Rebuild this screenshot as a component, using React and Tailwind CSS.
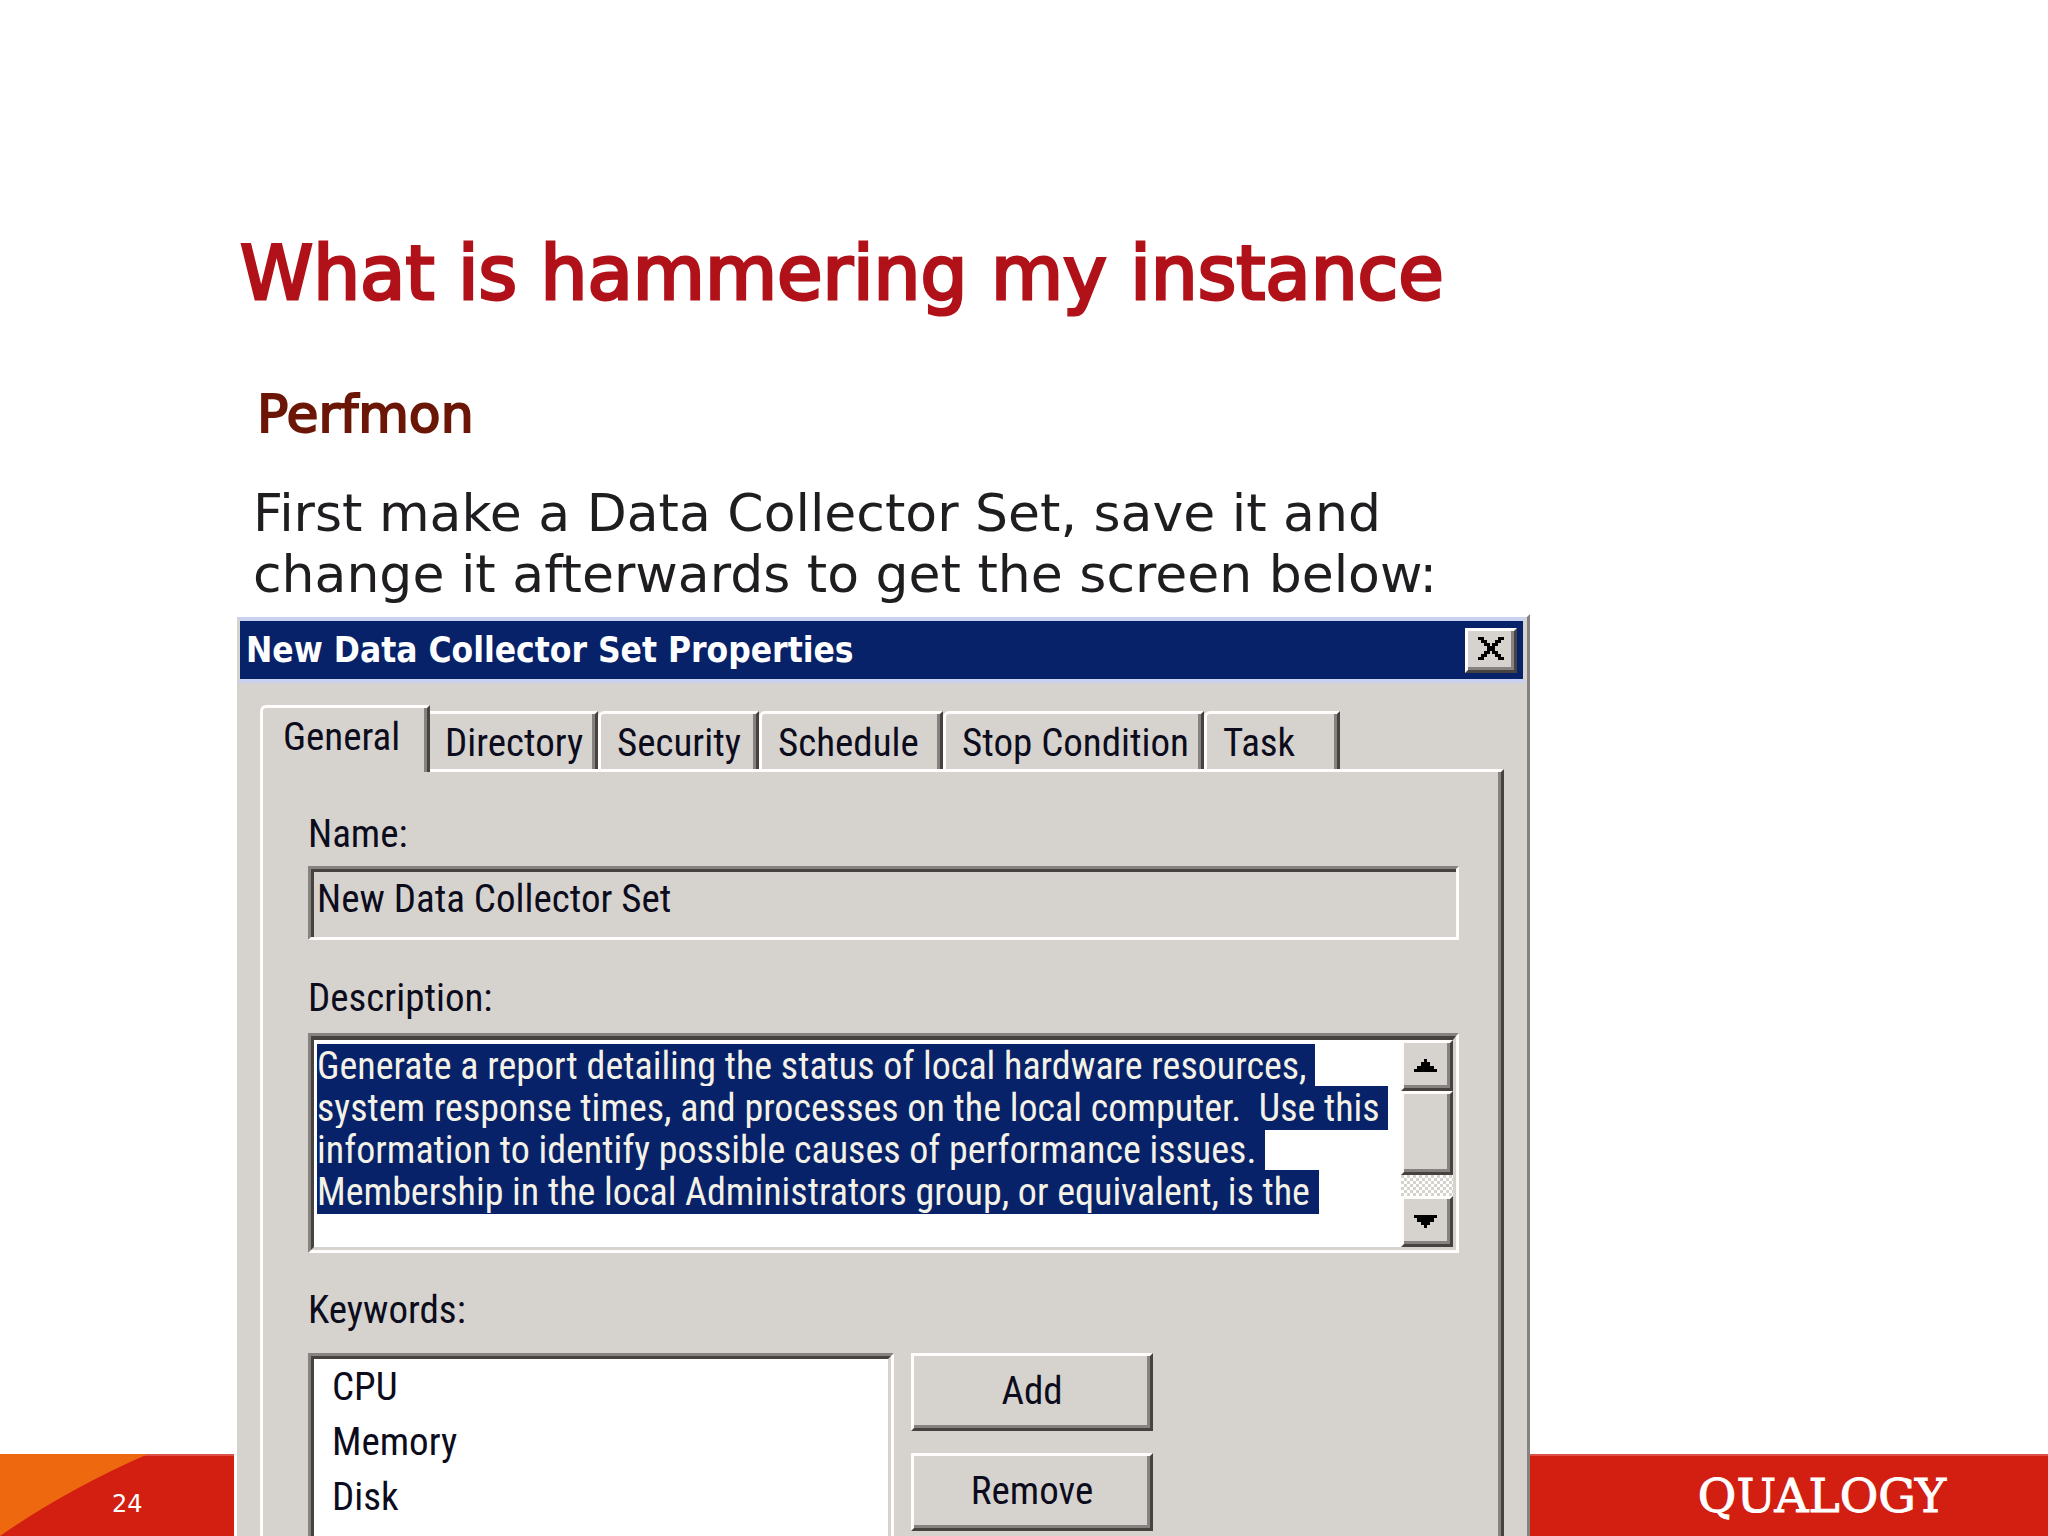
import React, { useEffect, useRef } from "react";

const tabs = [
  { name: "Directory", look: "w-[168px] pl-[15px]" },
  { name: "Security", look: "w-[161px] rounded-tl-[6px] border-l-[3px] pl-[16px]" },
  { name: "Schedule", look: "w-[184px] rounded-tl-[6px] border-l-[3px] pl-[16px]" },
  { name: "Stop Condition", look: "w-[261px] rounded-tl-[6px] border-l-[3px] pl-[16px]" },
  { name: "Task", look: "w-[136px] rounded-tl-[6px] border-l-[3px] pl-[16px]" },
];

const description = [
  "Generate a report detailing the status of local hardware resources,",
  "system response times, and processes on the local computer.  Use this",
  "information to identify possible causes of performance issues.",
  "Membership in the local Administrators group, or equivalent, is the",
  "",
].join("\n");

const raised =
  "border-[3px] border-t-[#fefdfb] border-l-[#fefdfb] border-r-[#454240] border-b-[#454240] bg-[#d6d3cf] shadow-[inset_-3px_-3px_0_#85827f]";
const sunken =
  "border-[3px] border-t-[#85827f] border-l-[#85827f] border-r-[#fefdfb] border-b-[#fefdfb]";

function Arrow({ up }) {
  return (
    <svg
      viewBox="0 0 7 4"
      preserveAspectRatio="none"
      className="h-[13px] w-[23px]"
      shapeRendering="crispEdges"
      aria-hidden="true"
    >
      <path d={up ? "M3 0h1v1h1v1h1v1h1v1H0V3h1V2h1V1h1z" : "M0 0h7v1H6v1H5v1H4v1H3V3H2V2H1V1H0z"} />
    </svg>
  );
}

function ScrollBar() {
  return (
    <div className="flex w-[52px] flex-col bg-[conic-gradient(#d6d3cf_25%,#fff_0_50%,#d6d3cf_0_75%,#fff_0)] bg-[length:6px_6px]">
      <button type="button" aria-label="Scroll up" className={"flex h-[51px] items-center justify-center pr-[3px] " + raised}>
        <Arrow up />
      </button>
      <div className={"h-[84px] " + raised} />
      <div className="flex-1" />
      <button type="button" aria-label="Scroll down" className={"flex h-[51px] items-center justify-center pr-[3px] " + raised}>
        <Arrow />
      </button>
    </div>
  );
}

function PropertiesDialog() {
  const area = useRef(null);
  useEffect(() => {
    area.current.focus({ preventScroll: true });
    area.current.select();
    area.current.scrollTop = 0;
  }, []);

  return (
    <section
      role="dialog"
      aria-labelledby="dialog-title"
      className="h-[1100px] border-l-[3px] border-l-white border-r-[3px] border-r-[#85827f] border-t-[3px] border-t-white bg-[#d6d3cf] font-['Roboto_Condensed','Liberation_Sans',sans-serif] text-[39px] leading-[40px] text-[#0c0c1c]"
    >
      <div className="border-y-4 border-l-[3px] border-r-[4px] border-y-[#c8d2f0] border-x-[#d6d3cf]">
        <div className="flex h-[58px] items-center justify-between bg-[#08226a] pl-[6px] pr-[6px]">
          <h2
            id="dialog-title"
            className="whitespace-nowrap font-['DejaVu_Sans_Condensed','DejaVu_Sans',sans-serif] text-[35px] font-bold leading-[58px] text-white"
          >
            New Data Collector Set Properties
          </h2>
          <button type="button" aria-label="Close" className={"flex h-[45px] w-[52px] items-center justify-center pb-[3px] " + raised}>
            <svg viewBox="0 0 9 8" className="h-[23px] w-[26px]" aria-hidden="true" shapeRendering="crispEdges">
              <path d="M0 0h2v1h1v1h1v1h1v-1h1v-1h1v-1h2v1h-1v1h-1v1h-1v2h1v1h1v1h1v1h-2v-1h-1v-1h-1v-1h-1v1h-1v1h-1v1h-2v-1h1v-1h1v-1h1v-2h-1v-1h-1v-1h-1z" />
            </svg>
          </button>
        </div>
      </div>

      <div className="pl-[23px] pr-[23px] pt-[22px]">
        <div role="tablist" className="flex items-end">
          <button
            type="button"
            role="tab"
            aria-selected="true"
            className="z-10 -mb-[3px] flex h-[67px] w-[170px] rounded-tl-[6px] border-l-[3px] border-r-[3px] border-t-[3px] border-l-[#fefdfb] border-r-[#454240] border-t-[#fefdfb] bg-[#d6d3cf] pl-[20px] pt-[9px] shadow-[inset_-3px_0_0_#85827f]"
          >
            General
          </button>
          {tabs.map((t) => (
            <button
              key={t.name}
              type="button"
              role="tab"
              aria-selected="false"
              className={
                "flex h-[58px] items-center whitespace-nowrap border-r-[3px] border-t-[3px] border-l-[#fefdfb] border-r-[#454240] border-t-[#fefdfb] bg-[#d6d3cf] pt-[3px] shadow-[inset_-3px_0_0_#85827f] " +
                t.look
              }
            >
              {t.name}
            </button>
          ))}
        </div>

        <div
          role="tabpanel"
          className="h-[900px] border-l-[3px] border-r-[3px] border-t-[3px] border-l-[#fefdfb] border-r-[#454240] border-t-[#fefdfb] pl-[45px] pr-[42px] pt-[42px] shadow-[inset_-3px_0_0_#85827f]"
        >
          <label htmlFor="set-name" className="block">
            Name:
          </label>
          <div className={"mt-[12px] h-[74px] " + sunken}>
            <input
              id="set-name"
              readOnly
              defaultValue="New Data Collector Set"
              className="block h-full w-full border-l-[3px] border-t-[3px] border-[#454240] bg-transparent pb-[12px] pl-[3px] outline-none"
            />
          </div>

          <label htmlFor="set-description" className="mt-[38px] block">
            Description:
          </label>
          <div className={"mt-[15px] h-[220px] " + sunken}>
            <div className="flex h-full border-b-[3px] border-l-[3px] border-r-[3px] border-t-[4px] border-b-[#d6d3cf] border-l-[#454240] border-r-[#d6d3cf] border-t-[#454240] bg-white">
              <textarea
                id="set-description"
                ref={area}
                spellCheck={false}
                defaultValue={description}
                className="min-w-0 flex-1 resize-none overflow-hidden whitespace-pre bg-white pl-[3px] pt-[5px] text-[38px] leading-[42px] outline-none selection:bg-[#08226a] selection:text-[#f4f2e6]"
              />
              <ScrollBar />
            </div>
          </div>

          <label htmlFor="set-keywords" className="mt-[37px] block">
            Keywords:
          </label>
          <div className="mt-[23px] flex items-start gap-[17px]">
            <div className={"h-[300px] w-[586px] " + sunken}>
              <select
                id="set-keywords"
                multiple
                size={4}
                className="block h-full w-full appearance-none overflow-hidden border-l-[3px] border-r-[3px] border-t-[3px] border-l-[#454240] border-r-[#d6d3cf] border-t-[#454240] bg-white pl-[18px] pt-[5px] outline-none"
              >
                <option className="h-[55px] p-0 leading-[55px]">CPU</option>
                <option className="h-[55px] p-0 leading-[55px]">Memory</option>
                <option className="h-[55px] p-0 leading-[55px]">Disk</option>
              </select>
            </div>
            <div className="flex w-[242px] flex-col gap-[22px]">
              <button type="button" className={"h-[78px] pb-[2px] " + raised}>
                Add
              </button>
              <button type="button" className={"h-[78px] pb-[2px] " + raised}>
                Remove
              </button>
            </div>
          </div>
        </div>
      </div>
    </section>
  );
}

export default function App() {
  return (
    <main className="grid h-screen grid-cols-1 grid-rows-[minmax(0,1fr)_82px] overflow-hidden bg-white font-['DejaVu_Sans',sans-serif]">
      <footer className="col-start-1 row-start-2 flex items-center justify-between border-t-2 border-[#dc5145] bg-[#d21f11]">
        <div className="flex h-full w-[234px] items-center">
          <svg viewBox="0 0 150 82" className="-mt-[2px] h-[82px] w-[150px] shrink-0" aria-hidden="true">
            <path d="M0 0H148Q66 36 0 82Z" fill="#ee680f" />
          </svg>
          <span className="-ml-[38px] mt-[16px] text-[24px] leading-[28px] text-white">24</span>
        </div>
        <span className="mr-[102px] font-['DejaVu_Serif',serif] text-[47px] leading-[80px] text-white [-webkit-text-stroke:1px_#fff]">
          QUALOGY
        </span>
      </footer>

      <div className="col-start-1 row-span-2 row-start-1 grid min-h-0 grid-cols-[234px_minmax(0,1296fr)_minmax(0,518fr)] overflow-hidden">
        <article className="col-start-2 pt-[227px]">
          <h1 className="whitespace-nowrap pl-[6px] text-[74px] leading-[92px] text-[#b11119] [-webkit-text-stroke:3px_#b11119]">
            What is hammering my instance
          </h1>
          <h2 className="mt-[65px] pl-[23px] text-[52px] leading-[60px] text-[#6b1607] [-webkit-text-stroke:2px_#6b1607]">
            Perfmon
          </h2>
          <p className="mt-[39px] pl-[19px] text-[52px] leading-[61px] text-[#1f1d20]">
            First make a Data Collector Set, save it and
            <br />
            change it afterwards to get the screen below:
          </p>
          <div className="mt-[9px]">
            <PropertiesDialog />
          </div>
        </article>
      </div>
    </main>
  );
}
